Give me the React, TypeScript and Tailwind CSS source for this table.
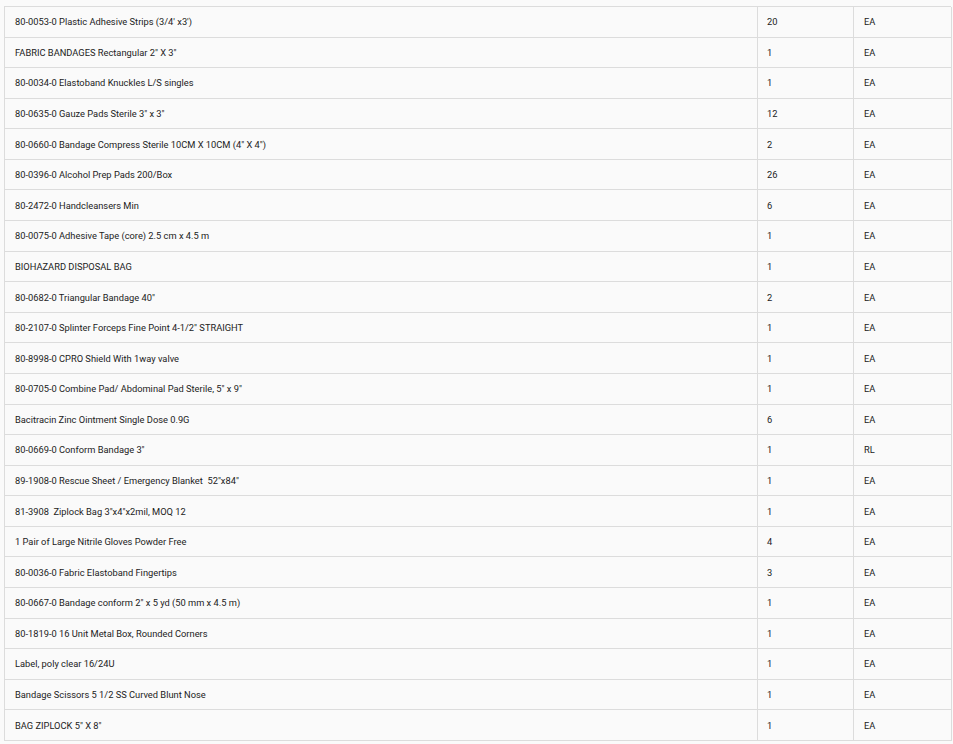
const items: [string, string, string][] = [
  ["80-0053-0 Plastic Adhesive Strips (3/4' x3')", "20", "EA"],
  ['FABRIC BANDAGES Rectangular 2" X 3"', "1", "EA"],
  ["80-0034-0 Elastoband Knuckles L/S singles", "1", "EA"],
  ['80-0635-0 Gauze Pads Sterile 3" x 3"', "12", "EA"],
  ['80-0660-0 Bandage Compress Sterile 10CM X 10CM (4" X 4")', "2", "EA"],
  ["80-0396-0 Alcohol Prep Pads 200/Box", "26", "EA"],
  ["80-2472-0 Handcleansers Min", "6", "EA"],
  ["80-0075-0 Adhesive Tape (core) 2.5 cm x 4.5 m", "1", "EA"],
  ["BIOHAZARD DISPOSAL BAG", "1", "EA"],
  ['80-0682-0 Triangular Bandage 40"', "2", "EA"],
  ['80-2107-0 Splinter Forceps Fine Point 4-1/2" STRAIGHT', "1", "EA"],
  ["80-8998-0 CPRO Shield With 1way valve", "1", "EA"],
  ['80-0705-0 Combine Pad/ Abdominal Pad Sterile, 5" x 9"', "1", "EA"],
  ["Bacitracin Zinc Ointment Single Dose 0.9G", "6", "EA"],
  ['80-0669-0 Conform Bandage 3"', "1", "RL"],
  ['89-1908-0 Rescue Sheet / Emergency Blanket\u00a0 52"x84"', "1", "EA"],
  ['81-3908\u00a0 Ziplock Bag 3"x4"x2mil, MOQ 12', "1", "EA"],
  ["1 Pair of Large Nitrile Gloves Powder Free", "4", "EA"],
  ["80-0036-0 Fabric Elastoband Fingertips", "3", "EA"],
  ['80-0667-0 Bandage conform 2" x 5 yd (50 mm x 4.5 m)', "1", "EA"],
  ["80-1819-0 16 Unit Metal Box, Rounded Corners", "1", "EA"],
  ["Label, poly clear 16/24U", "1", "EA"],
  ["Bandage Scissors 5 1/2 SS Curved Blunt Nose", "1", "EA"],
  ['BAG ZIPLOCK 5" X 8"', "1", "EA"],
];

export default function App() {
  return (
    <div className="min-h-[744px] w-[953px] bg-[#fafafa] pl-[4px] pt-[6px] font-['Roboto',sans-serif] text-[9.3px] text-[#222]">
      <div className="w-[947px] border-l border-t border-[#dcdcdc]">
        {items.map(([name, qty, unit]) => (
          <div key={name} className="grid h-[30.58px] grid-cols-[753px_96px_98px]">
            <div className="flex items-center border-b border-r border-[#dcdcdc] pl-[10px] pt-[1px]">{name}</div>
            <div className="flex items-center border-b border-r border-[#dcdcdc] pl-[9px] pt-[1px]">{qty}</div>
            <div className="flex items-center border-b border-r border-[#dcdcdc] pl-[10px] pt-[1px]">{unit}</div>
          </div>
        ))}
      </div>
    </div>
  );
}
